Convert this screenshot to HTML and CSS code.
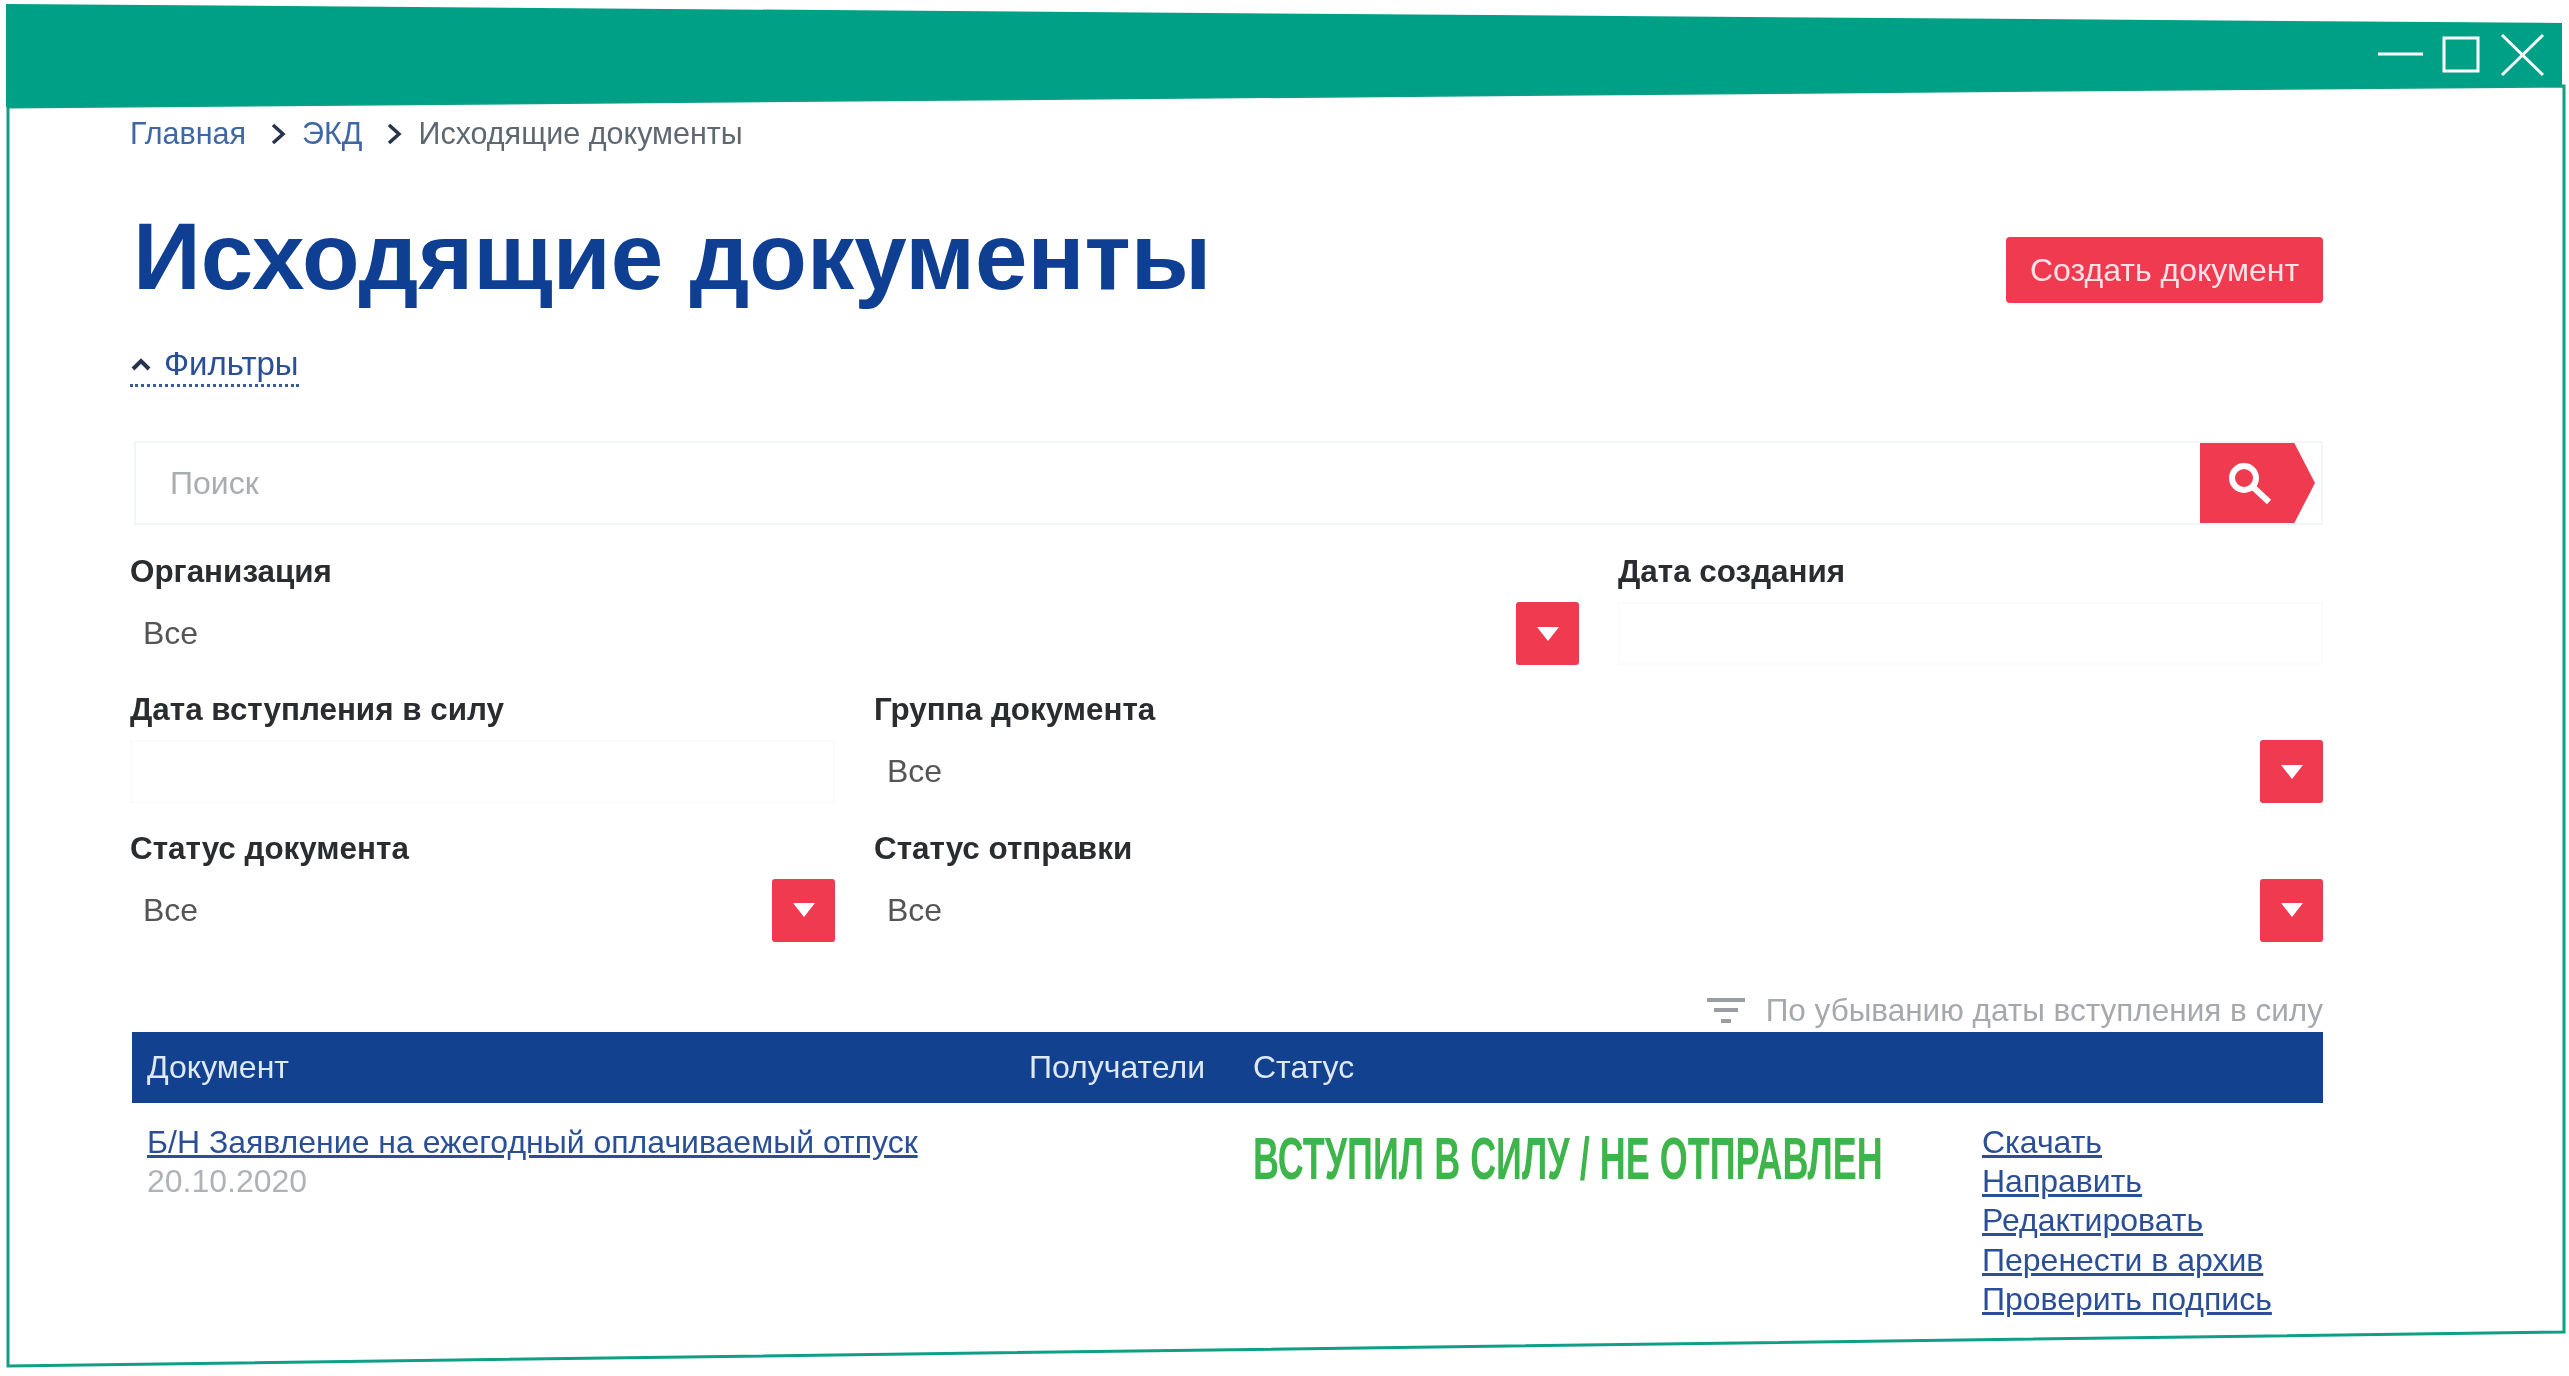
FILE: index.html
```html
<!DOCTYPE html>
<html lang="ru">
<head>
  <meta charset="UTF-8" />
  <title>Исходящие документы</title>
  <link rel="stylesheet" href="styles.css">
</head>
<body>
  <svg class="frame" width="2569" height="1376" viewBox="0 0 2569 1376">
    <polygon class="frame-bg" points="8,107 2564,86 2564,1332 8,1366" />
    <polygon class="frame-bar" points="6,4 2562,23 2562,86 6,107" />
    <path class="frame-btn" d="M2378 54H2423M2444 38H2478V71H2444ZM2502 35L2543 75M2543 35L2502 75" />
  </svg>

  <main class="page">
    <nav class="crumbs">
      <a href="#">Главная</a>
      <svg class="crumb-sep" width="16" height="24" viewBox="0 0 16 24"><path d="M3 3L13 12L3 21" /></svg>
      <a href="#">ЭКД</a>
      <svg class="crumb-sep" width="16" height="24" viewBox="0 0 16 24"><path d="M3 3L13 12L3 21" /></svg>
      <span>Исходящие документы</span>
    </nav>

    <div class="title-row">
      <h1>Исходящие документы</h1>
      <a class="btn-create" href="#">Создать документ</a>
    </div>

    <a class="filters-toggle" href="#">
      <svg width="22" height="14" viewBox="0 0 22 14"><path d="M3 12L11 4L19 12" /></svg>
      Фильтры
    </a>

    <div class="search">
      <span class="search-text">Поиск</span>
      <button class="search-btn">
        <svg width="50" height="46" viewBox="0 0 50 46"><circle cx="18" cy="18" r="12" /><path d="M27 27L43 42" /></svg>
      </button>
    </div>

    <div class="filters">
      <div class="field span-2">
        <label>Организация</label>
        <div class="select"><span>Все</span><i class="caret"></i></div>
      </div>
      <div class="field">
        <label>Дата создания</label>
        <div class="input"></div>
      </div>
      <div class="field">
        <label>Дата вступления в силу</label>
        <div class="input"></div>
      </div>
      <div class="field span-2">
        <label>Группа документа</label>
        <div class="select"><span>Все</span><i class="caret"></i></div>
      </div>
      <div class="field">
        <label>Статус документа</label>
        <div class="select"><span>Все</span><i class="caret"></i></div>
      </div>
      <div class="field span-2">
        <label>Статус отправки</label>
        <div class="select"><span>Все</span><i class="caret"></i></div>
      </div>
    </div>

    <div class="sort">
      <svg width="40" height="26" viewBox="0 0 40 26"><path d="M1 2H39M8 12H32M15 23H25" /></svg>
      По убыванию даты вступления в силу
    </div>

    <div class="table-head">
      <span class="col-doc">Документ</span>
      <span class="col-to">Получатели</span>
      <span>Статус</span>
    </div>
    <div class="table-row">
      <div class="col-doc">
        <a href="#">Б/Н Заявление на ежегодный оплачиваемый отпуск</a>
        <div class="date">20.10.2020</div>
      </div>
      <div class="col-to"></div>
      <div class="col-status"><span class="status">ВСТУПИЛ В СИЛУ / НЕ ОТПРАВЛЕН</span></div>
      <div class="actions">
        <a href="#">Скачать</a>
        <a href="#">Направить</a>
        <a href="#">Редактировать</a>
        <a href="#">Перенести в архив</a>
        <a href="#">Проверить подпись</a>
      </div>
    </div>
  </main>
</body>
</html>
```

FILE: styles.css
```css
body { margin: 0; background: #fff; font-family: "Liberation Sans", Arial, sans-serif; font-size: 32px; color: #555; height: 1376px; overflow: hidden; position: relative; }
a { color: #2a4f96; }

.frame { position: absolute; left: 0; top: 0; }
.frame-bg { fill: #fff; stroke: #0e9f86; stroke-width: 3; }
.frame-bar { fill: #00a086; }
.frame-btn { fill: none; stroke: #fff; stroke-width: 3; }

.page { position: relative; width: 2193px; margin-left: 130px; padding-top: 113px; filter: blur(.6px); }

.crumbs { display: flex; align-items: center; height: 40px; font-size: 30.5px; }
.crumbs a { color: #3f67a5; text-decoration: none; }
.crumbs span { color: #5f6870; }
.crumb-sep { margin: 2px 16px 0 24px; }
.crumb-sep path { fill: none; stroke: #27334d; stroke-width: 3.5; }

.title-row { display: flex; justify-content: space-between; align-items: flex-end; height: 150px; }
h1 { margin: 0 0 1px 3px; font-size: 94.3px; line-height: 90px; font-weight: bold; color: #0f3f92; }
.btn-create { display: flex; align-items: center; justify-content: center; width: 317px; height: 66px; background: #ef3a50; border-radius: 4px; color: #fde3e6; text-decoration: none; }

.filters-toggle { display: inline-flex; align-items: center; gap: 12px; height: 40px; margin-top: 41px; font-size: 33px; color: #2a4f96; text-decoration: none; border-bottom: 3px dotted #3c5a94; }
.filters-toggle path { fill: none; stroke: #27334d; stroke-width: 4; }

.search { display: flex; justify-content: space-between; align-items: center; height: 84px; margin: 54px 0 0 4px; padding-left: 34px; border: 2px solid #f3f6f7; box-sizing: border-box; }
.search-text { color: #a8adb0; }
.search-btn { display: flex; align-items: center; justify-content: center; width: 115px; height: 80px; margin-right: 6px; padding: 0 14px 0 0; border: 0; background: #ef3a50; clip-path: polygon(0 0, 82% 0, 100% 50%, 82% 100%, 0 100%); }
.search-btn circle, .search-btn path { fill: none; stroke: #fff; stroke-width: 6; }

.filters { display: grid; grid-template-columns: repeat(3, 1fr); column-gap: 39px; row-gap: 25.4px; margin-top: 27px; }
.span-2 { grid-column: span 2; }
.field label { display: block; height: 40px; line-height: 40px; font-size: 31.4px; font-weight: bold; color: #2a2d30; }
.select, .input { height: 63px; margin-top: 10px; box-sizing: border-box; }
.select { display: flex; justify-content: space-between; align-items: center; padding-left: 13px; }
.input { border: 2px solid #fbfbfb; }
.caret { display: flex; align-items: center; justify-content: center; width: 63px; height: 63px; background: #ef3a50; border-radius: 3px; }
.caret::after { content: ""; border: 11px solid transparent; border-top: 14px solid #fff; border-bottom: 0; }

.sort { display: flex; justify-content: flex-end; align-items: center; gap: 20px; height: 40px; margin-top: 49px; font-size: 31.5px; color: #a5a9ad; }
.sort path { fill: none; stroke: #9a9ea2; stroke-width: 4; }

.table-head { display: flex; align-items: center; height: 71px; margin-top: 1px; margin-left: 2px; background: #11418f; color: #dfe8f5; }
.col-doc { width: 882px; padding-left: 15px; flex-shrink: 0; }
.col-to { width: 224px; flex-shrink: 0; }
.table-row { display: flex; margin-left: 2px; padding-top: 20px; }
.table-row .col-doc a { display: block; line-height: 39px; }
.date { color: #b0b3b6; line-height: 39px; }
.col-status { width: 729px; flex-shrink: 0; padding-top: 6px; }
.status { display: inline-block; transform-origin: 0 0; transform: scaleX(.6); font-family: "Liberation Sans Narrow", "Liberation Sans", sans-serif; font-size: 60px; line-height: 60px; font-weight: bold; color: #3db54a; white-space: nowrap; }
.actions a { display: block; line-height: 39.3px; }
```
